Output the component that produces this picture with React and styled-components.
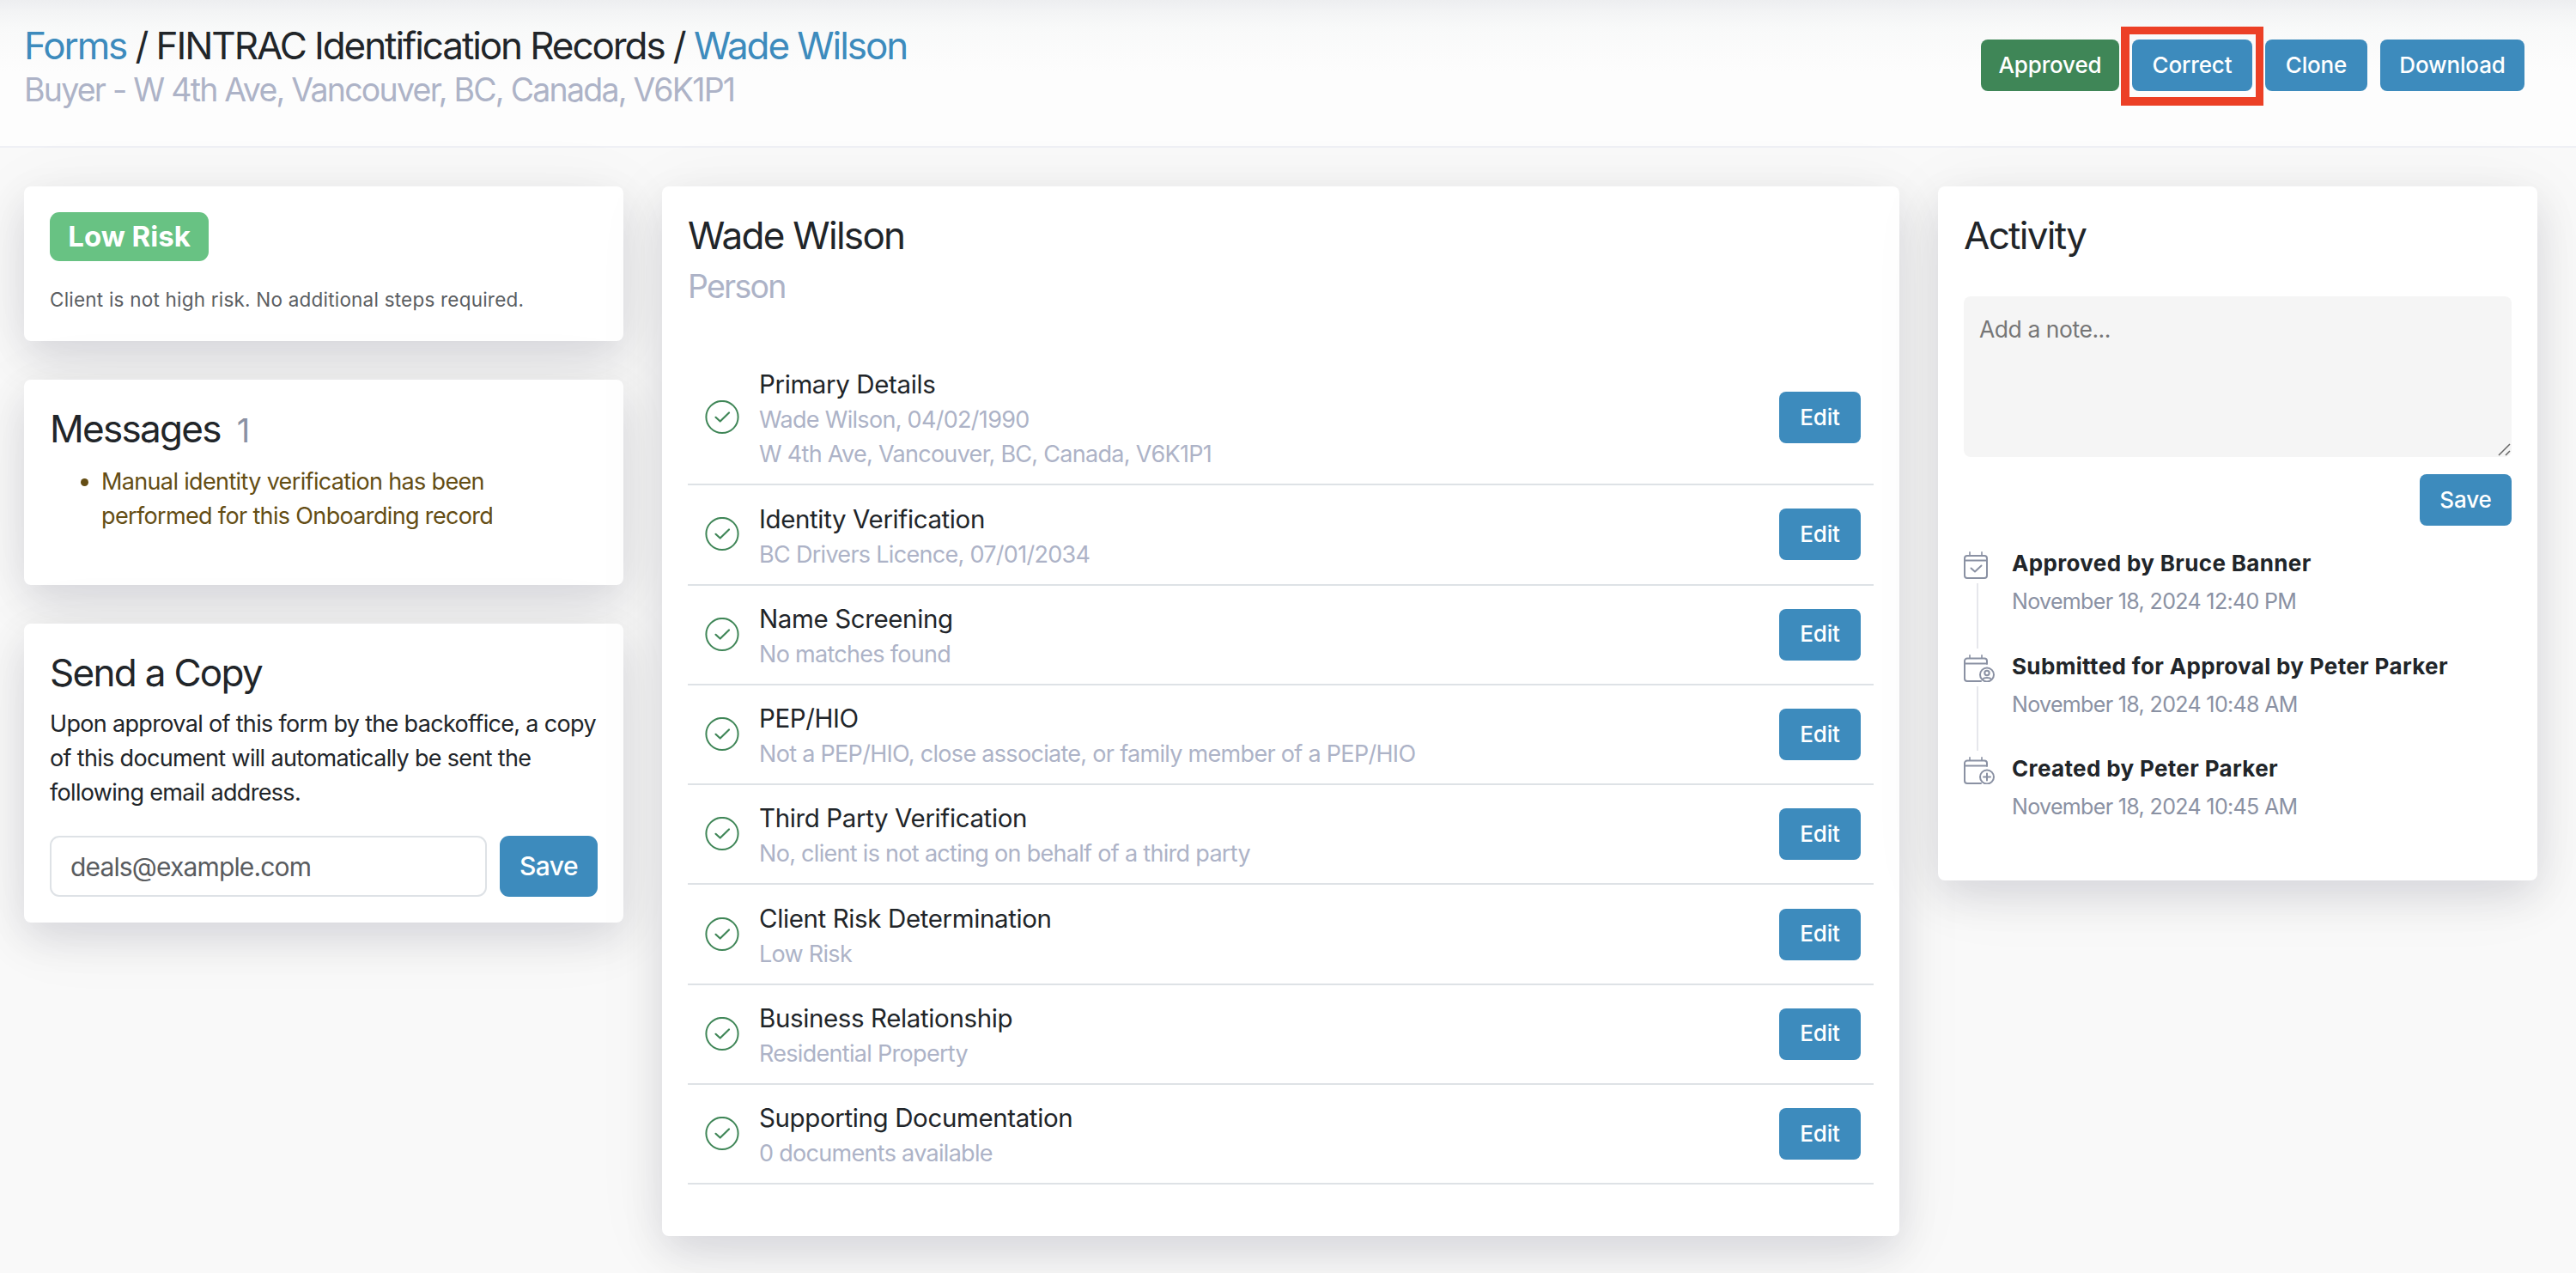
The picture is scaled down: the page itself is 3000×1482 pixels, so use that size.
import React from 'react'
import styled, { createGlobalStyle } from 'styled-components';

const GlobalStyle = createGlobalStyle`
    *, *::after {
        box-sizing:border-box;
    }
    body {
        margin:0;
        background:#f9f9f9;
        color:#212529;
        font-family:Inter, "Liberation Sans", sans-serif;
        font-size:27px;
        line-height:40px;
    }
`;

const Page = styled.div`
    min-height:1482px;
    overflow:hidden;
`;

const Header = styled.header`
    display:flex;
    justify-content:space-between;
    align-items:flex-start;
    height:172px;
    padding:26px 60px 0 28px;
    border-bottom:2px solid #eff0f5;
    background:linear-gradient(#edeef0 0, #f3f4f5 14px, #f8f9f9 32px, #fbfbfb 60px, #fdfdfd 84px);
`;

const Title = styled.h1`
    margin:0;
    font-size:44px;
    font-weight:400;
    line-height:54px;
    letter-spacing:${({ $spacing }) => $spacing || '-1.7px'};
`;

const Subtitle = styled.div`
    margin-top:${({ $top }) => $top || '2px'};
    color:#adb3c7;
    font-size:37.5px;
    line-height:46px;
    letter-spacing:-1.77px;
`;

const A = styled.a`
    color:#3d8bbd;
    text-decoration:none;
`;

const Actions = styled.div`
    display:flex;
    gap:15px;
    padding-top:20px;
`;

const Button = styled.button`
    flex:none;
    width:${({ $width }) => $width};
    height:60px;
    padding:0 0 1px;
    border:0;
    border-radius:8px;
    background:${({ $color }) => $color || '#3d8bbd'};
    color:#fff;
    font-family:inherit;
    font-size:26px;
    font-weight:500;
    line-height:40px;
    letter-spacing:-.15px;
`;

const SaveButton = styled(Button)`
    height:71px;
    border-radius:11px;
    font-size:30px;
    letter-spacing:-.5px;
`;

const Marked = styled.div`
    position:relative;
    display:flex;

    &::after {
        content:'';
        position:absolute;
        top:-15px;
        left:-13px;
        width:166px;
        height:92px;
        border:solid #ec4026;
        border-width:9px 9px 10px 10px;
    }
`;

const Columns = styled.main`
    display:grid;
    grid-template-columns:698px 1441px 698px;
    align-items:start;
    gap:45px;
    padding:45px 0 0 28px;
`;

const Stack = styled.div`
    display:grid;
    grid-template-columns:minmax(0, 1fr);
    gap:45px;
`;

const Card = styled.section`
    padding:30px;
    border-radius:8px;
    background:#fff;
    box-shadow:0 18px 48px rgba(4, 9, 45, .11), 0 12px 90px rgba(4, 9, 30, .06);
`;

const Badge = styled.div`
    width:185px;
    height:57px;
    border-radius:11px;
    background:#68c283;
    color:#fff;
    font-size:33px;
    font-weight:700;
    line-height:57px;
    text-align:center;
`;

const RiskText = styled.p`
    margin:27px 0 0;
    color:#5b5e62;
    font-size:22.5px;
    line-height:36px;
    letter-spacing:.21px;
`;

const Count = styled.span`
    margin-left:19px;
    color:#8a91a3;
    font-size:38px;
`;

const Messages = styled.ul`
    margin:13px 0 30px;
    padding-left:60px;
    color:#644d14;
    letter-spacing:-.65px;
`;

const Text = styled.p`
    margin:13px 0 30px;
    letter-spacing:-.67px;
    white-space:nowrap;
`;

const CopyForm = styled.div`
    display:flex;
    gap:15px;
`;

const Input = styled.input`
    flex:1;
    min-width:0;
    height:71px;
    padding:0 22px;
    border:2px solid #dee2e6;
    border-radius:11px;
    background:#fff;
    color:#595c5f;
    font-family:inherit;
    font-size:30px;
    letter-spacing:-.85px;
`;

const List = styled.div`
    margin:52px 0 30px;
`;

const Row = styled.div`
    display:flex;
    align-items:center;
    padding:14px 15px 14px 20px;
    border-bottom:2px solid #dee2e6;
`;

const RowBody = styled.div`
    flex:1;
    margin-left:22px;
    padding-top:3.3px;
`;

const RowTitle = styled.div`
    font-size:29.5px;
    line-height:43px;
    letter-spacing:-.38px;
`;

const RowText = styled.div`
    color:#adb3c7;
    letter-spacing:-.7px;
`;

const NoteBox = styled.div`
    position:relative;
    display:flex;
    margin-top:44px;
`;

const Note = styled.textarea`
    width:100%;
    height:187px;
    padding:18px;
    border:0;
    border-radius:8px;
    background:#f5f5f5;
    font-family:inherit;
    font-size:26.5px;
    line-height:40px;
    letter-spacing:-.45px;
    resize:none;

    &::placeholder {
        color:#767676;
    }
`;

const Grip = styled.svg`
    position:absolute;
    right:1px;
    bottom:1px;
`;

const NoteActions = styled.div`
    display:flex;
    justify-content:flex-end;
    margin:20px 0 24px;
`;

const Event = styled.div`
    display:flex;
    height:119.5px;
`;

const Rail = styled.div`
    display:flex;
    flex-direction:column;
    width:56px;
    padding-top:6px;
`;

const RailLine = styled.div`
    flex:1;
    width:2px;
    margin:5px 0 1px 15px;
    background:#e6e7ec;
`;

const EventTitle = styled.div`
    font-size:26px;
    font-weight:700;
    letter-spacing:.35px;
`;

const EventDate = styled.div`
    margin-top:6px;
    color:#8a91a3;
    font-size:25px;
    line-height:36px;
    letter-spacing:-.65px;
`;

const rows = [
    { title: 'Primary Details', lines: ['Wade Wilson, 04/02/1990', 'W 4th Ave, Vancouver, BC, Canada, V6K1P1'] },
    { title: 'Identity Verification', lines: ['BC Drivers Licence, 07/01/2034'] },
    { title: 'Name Screening', lines: ['No matches found'] },
    { title: 'PEP/HIO', lines: ['Not a PEP/HIO, close associate, or family member of a PEP/HIO'] },
    { title: 'Third Party Verification', lines: ['No, client is not acting on behalf of a third party'] },
    { title: 'Client Risk Determination', lines: ['Low Risk'] },
    { title: 'Business Relationship', lines: ['Residential Property'] },
    { title: 'Supporting Documentation', lines: ['0 documents available'] },
];

const events = [
    { icon: 'check', title: 'Approved by Bruce Banner', date: 'November 18, 2024 12:40 PM' },
    { icon: 'user', title: 'Submitted for Approval by Peter Parker', date: 'November 18, 2024 10:48 AM' },
    { icon: 'plus', title: 'Created by Peter Parker', date: 'November 18, 2024 10:45 AM' },
];

const CheckCircle = () => (
    <svg width="41" height="40" viewBox="0 0 41 40" fill="none" stroke="#3f8657">
        <circle cx="20" cy="19.5" r="18.6" strokeWidth="2" />
        <path d="M12.5 19.8l5.2 4.7L28 14.5" strokeWidth="2.2" strokeLinecap="round" strokeLinejoin="round" />
    </svg>
)

const CalendarIcon = ({ type }) => (
    <svg width="37" height="32" viewBox="0 0 37 32" fill="none" stroke="#8a91a3" strokeWidth="2" strokeLinecap="round" strokeLinejoin="round">
        <path d="M7 .8v3M21 .8v3" strokeWidth="1.6" />
        {type === 'check' && <>
            <rect x="1" y="5" width="26" height="26" rx="3" />
            <path d="M1 10.5h26M8.5 19.5l4.5 4 7.5-7" />
        </>}
        {type !== 'check' && <>
            <path d="M20 31H4a3 3 0 0 1-3-3V7.5a3 3 0 0 1 3-3h20a3 3 0 0 1 3 3V11M1 10.5h26" />
            <circle cx="27" cy="23.5" r="8" />
        </>}
        {type === 'user' && <>
            <circle cx="27" cy="21.5" r="2.7" />
            <path d="M22.2 28.5c1.5-2 8.1-2 9.6 0" />
        </>}
        {type === 'plus' && <path d="M27 19.5v8M23 23.5h8" />}
    </svg>
)

const App = () => {
    return (
        <Page>
            <GlobalStyle />
            <Header>
                <div>
                    <Title $spacing="-2.08px"><A href='#'>Forms</A> / FINTRAC Identification Records / <A href='#'>Wade Wilson</A></Title>
                    <Subtitle>Buyer - W 4th Ave, Vancouver, BC, Canada, V6K1P1</Subtitle>
                </div>
                <Actions>
                    <Button $width="161px" $color="#3f8657">Approved</Button>
                    <Marked><Button $width="140px">Correct</Button></Marked>
                    <Button $width="119px">Clone</Button>
                    <Button $width="168px">Download</Button>
                </Actions>
            </Header>
            <Columns>
                <Stack>
                    <Card>
                        <Badge>Low Risk</Badge>
                        <RiskText>Client is not high risk. No additional steps required.</RiskText>
                    </Card>
                    <Card>
                        <Title as="h2">Messages<Count>1</Count></Title>
                        <Messages>
                            <li>Manual identity verification has been<br />performed for this Onboarding record</li>
                        </Messages>
                    </Card>
                    <Card>
                        <Title as="h2">Send a Copy</Title>
                        <Text>
                            Upon approval of this form by the backoffice, a copy<br />
                            of this document will automatically be sent the<br />
                            following email address.
                        </Text>
                        <CopyForm>
                            <Input defaultValue="deals@example.com" />
                            <SaveButton $width="114px">Save</SaveButton>
                        </CopyForm>
                    </Card>
                </Stack>
                <Card>
                    <Title as="h2">Wade Wilson</Title>
                    <Subtitle $top="10px">Person</Subtitle>
                    <List>
                        {
                            rows.map((row) => (
                                <Row key={row.title}>
                                    <CheckCircle />
                                    <RowBody>
                                        <RowTitle>{row.title}</RowTitle>
                                        {row.lines.map((line) => <RowText key={line}>{line}</RowText>)}
                                    </RowBody>
                                    <Button $width="95px">Edit</Button>
                                </Row>
                            ))
                        }
                    </List>
                </Card>
                <Card>
                    <Title as="h2">Activity</Title>
                    <NoteBox>
                        <Note placeholder="Add a note..." />
                        <Grip width="15" height="15" viewBox="0 0 15 15" stroke="#666" strokeWidth="1.5">
                            <path d="M1 14L14 1M9 14l5-5" />
                        </Grip>
                    </NoteBox>
                    <NoteActions>
                        <Button $width="107px">Save</Button>
                    </NoteActions>
                    {
                        events.map((event, index) => (
                            <Event key={event.title}>
                                <Rail>
                                    <CalendarIcon type={event.icon} />
                                    {index < events.length - 1 && <RailLine />}
                                </Rail>
                                <div>
                                    <EventTitle>{event.title}</EventTitle>
                                    <EventDate>{event.date}</EventDate>
                                </div>
                            </Event>
                        ))
                    }
                </Card>
            </Columns>
        </Page>
    )
}

export default App;
